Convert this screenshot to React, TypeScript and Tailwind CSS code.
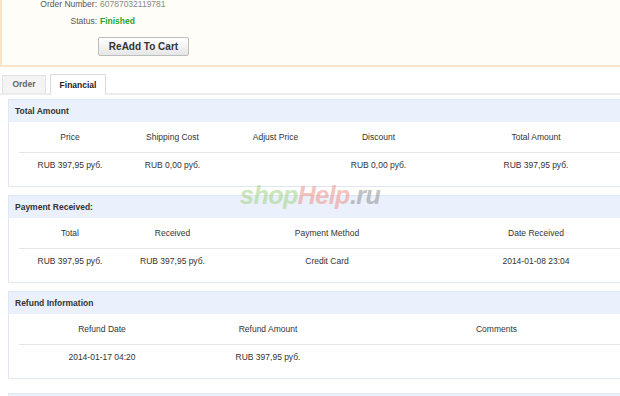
import React from 'react';

type Col = { label: string; value: string; w: string };

const totalCols: Col[] = [
    { label: 'Price', value: 'RUB 397,95 руб.', w: 'w-[102px]' },
    { label: 'Shipping Cost', value: 'RUB 0,00 руб.', w: 'w-[103px]' },
    { label: 'Adjust Price', value: '', w: 'w-[103px]' },
    { label: 'Discount', value: 'RUB 0,00 руб.', w: 'w-[103px]' },
    { label: 'Total Amount', value: 'RUB 397,95 руб.', w: 'w-[212px]' },
];

const paymentCols: Col[] = [
    { label: 'Total', value: 'RUB 397,95 руб.', w: 'w-[102px]' },
    { label: 'Received', value: 'RUB 397,95 руб.', w: 'w-[103px]' },
    { label: 'Payment Method', value: 'Credit Card', w: 'w-[206px]' },
    { label: 'Date Received', value: '2014-01-08 23:04', w: 'w-[212px]' },
];

const refundCols: Col[] = [
    { label: 'Refund Date', value: '2014-01-17 04:20', w: 'w-[166px]' },
    { label: 'Refund Amount', value: 'RUB 397,95 руб.', w: 'w-[166px]' },
    { label: 'Comments', value: '', w: 'w-[291px]' },
];

function Panel({ title, cols }: { title: string; cols: Col[] }) {
    return (
        <section className="border border-[#dfe7f3] bg-white">
            <div className="h-[22px] bg-[#eaf1fc] pl-[6px] flex items-center font-bold text-[#333]">
                {title}
            </div>
            <div className="px-[10px] pb-[8px]">
                <div className="flex h-[31px] items-center border-b border-[#e6e6e6]">
                    {cols.map((c) => (
                        <div key={c.label} className={`${c.w} text-center`}>{c.label}</div>
                    ))}
                </div>
                <div className="flex h-[25px] items-center">
                    {cols.map((c) => (
                        <div key={c.label} className={`${c.w} text-center`}>{c.value}</div>
                    ))}
                </div>
            </div>
        </section>
    );
}

export default function App() {
    return (
        <div className="w-[620px] h-[396px] overflow-hidden bg-white relative font-['Liberation_Sans',Arial,sans-serif] text-[8.5px] leading-none text-[#333]">
            <div className="w-[660px]">
                {/* Order summary box */}
                <div className="-mt-[4px] bg-[#fffdf8] border-l-2 border-b-2 border-[#f8e4c9] pb-[9px]">
                    <div className="flex h-[17px] items-center">
                        <span className="w-[95px] text-right text-[#555]">Order Number:</span>
                        <span className="ml-[3px] text-[#8a8a8a]">60787032119781</span>
                    </div>
                    <div className="flex h-[17px] items-center">
                        <span className="w-[95px] text-right text-[#555]">Status:</span>
                        <span className="ml-[3px] font-bold text-[#2aa52a]">Finished</span>
                    </div>
                    <button className="ml-[96px] mt-[7px] h-[19px] w-[91px] rounded-[2px] border border-[#bdbdbd] bg-gradient-to-b from-white to-[#e6e6e6] text-[10px] font-bold text-[#333]">
                        ReAdd To Cart
                    </button>
                </div>

                {/* Tabs */}
                <div className="mt-[7px] flex items-end gap-[4px] pl-[2px] border-b-2 border-[#ececec]">
                    <div className="h-[18px] w-[44px] flex items-center justify-center border border-b-0 border-[#e2e2e2] bg-[#f4f4f4] font-bold text-[#666]">
                        Order
                    </div>
                    <div className="-mb-[2px] h-[21px] w-[56px] flex items-center justify-center border border-b-0 border-[#dcdcdc] bg-white font-bold text-[#222]">
                        Financial
                    </div>
                </div>

                {/* Panels */}
                <div className="ml-[8px] mt-[4px] flex flex-col gap-[8px]">
                    <Panel title="Total Amount" cols={totalCols} />
                    <Panel title="Payment Received:" cols={paymentCols} />
                    <Panel title="Refund Information" cols={refundCols} />
                    <div className="mt-[6px] h-[20px] border border-[#dfe7f3] bg-[#eaf1fc]" />
                </div>
            </div>

            {/* Watermark */}
            <div className="absolute left-[240px] top-[180px] pointer-events-none select-none">
                <div className="text-[25px] font-bold italic leading-[30px] tracking-[-0.5px] opacity-60">
                    <span className="text-[#a9d68e]">shop</span>
                    <span className="text-[#ef9a92]">Help</span>
                    <span className="text-[#9a9a9a]">.ru</span>
                </div>
            </div>
        </div>
    );
}
